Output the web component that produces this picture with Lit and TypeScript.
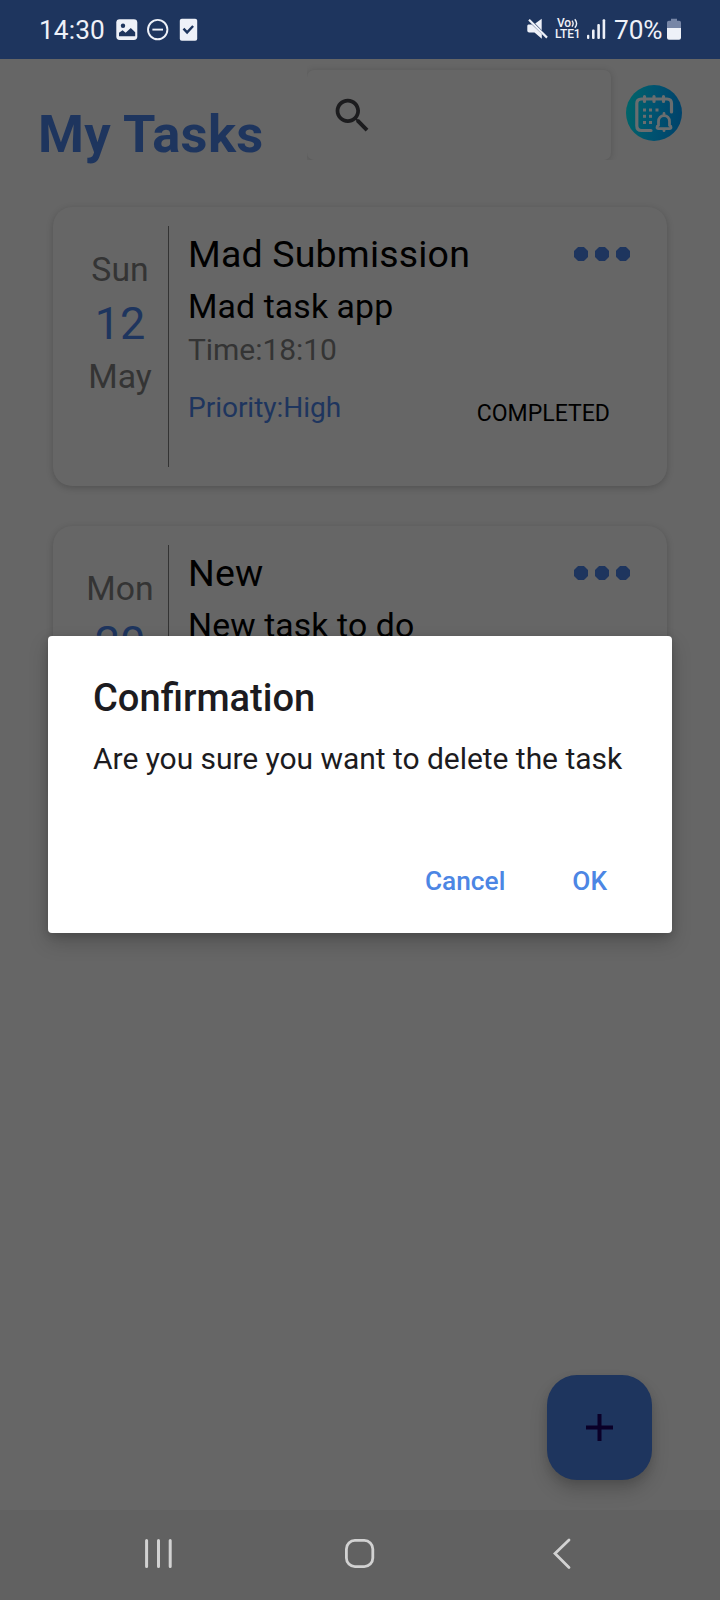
import { LitElement, html, css, nothing } from "lit";
import { customElement, property } from "lit/decorators.js";

interface Task {
  weekday: string;
  day: string;
  month?: string;
  title: string;
  description: string;
  time?: string;
  priority?: string;
  status?: string;
}

const TASKS: Task[] = [
  { weekday: "Sun", day: "12", month: "May", title: "Mad Submission", description: "Mad task app", time: "18:10", priority: "High", status: "COMPLETED" },
  { weekday: "Mon", day: "20", title: "New", description: "New task to do" },
];

@customElement("status-bar")
class StatusBar extends LitElement {
  static styles = css`
    :host { display: flex; height: 59px; background: #1e355e; color: #eef1f8; padding: 0 39px 0 39px; box-sizing: border-box; }
    .group { display: flex; align-items: flex-start; }
    .right { margin-left: auto; }
    .text { font-size: 26.25px; line-height: 30px; margin-top: 15px; white-space: nowrap; }
    .clock { width: 76.5px; letter-spacing: 0.1px; }
    .percent { width: 53px; letter-spacing: -0.1px; }
    svg { display: block; margin-top: 18px; flex: none; }
    .gap-a { margin-right: 9px; }
    .gap-b { margin-right: 10px; }
    .gap-c { margin-right: 6px; }
    .gap-d { margin-right: 8px; }
    .volte { width: 26px; margin: 18px 6px 0 0; font-weight: 500; white-space: nowrap; }
    .vo { font-size: 12px; line-height: 11px; padding-left: 2px; display: flex; letter-spacing: -0.3px; }
    .waves { margin: 0; }
    .lte { font-size: 12px; line-height: 11px; letter-spacing: -0.1px; }
  `;
  render() {
    return html`
      <div class="group">
        <span class="text clock">14:30</span>
        <svg class="gap-a" width="22" height="23" viewBox="0 0 22 23">
          <rect x="0.3" y="1.2" width="21" height="20.8" rx="3.4" fill="#eef1f8" />
          <circle cx="7" cy="7.7" r="2.2" fill="#1e355e" />
          <path d="M3 18.2v-3.4l3.6-2.6 3 2.6 5.2-4.8 4.4 4.2v4z" fill="#1e355e" />
        </svg>
        <svg class="gap-b" width="22" height="23" viewBox="0 0 22 23" fill="none" stroke="#eef1f8" stroke-width="1.9">
          <circle cx="10.7" cy="11.6" r="9.7" />
          <path d="M5.4 11.6h10.6" />
        </svg>
        <svg width="20" height="23" viewBox="0 0 20 23">
          <rect x="0.8" y="0.7" width="17.4" height="22" rx="2" fill="#eef1f8" />
          <path d="M4.500 10.600l3.600 3.800 6-6.400" fill="none" stroke="#1e355e" stroke-width="2.4" />
        </svg>
      </div>
      <div class="group right">
        <svg class="gap-c" width="22" height="22" viewBox="0 0 22 22">
          <path d="M1.400 6.500h3.400l10 9.500v4.700L7.500 14.500H2.200Q.3 14.500.3 12.800V8q0-1.500 1.100-1.500z" fill="#eef1f8" />
          <path d="M8.200 5.400l6.500-4.600v11.400z" fill="#eef1f8" />
          <path d="M2 1.800l18 17.800" stroke="#eef1f8" stroke-width="2.200" />
        </svg>
        <div class="volte">
          <div class="vo">Vo
            <svg class="waves" width="8" height="11" viewBox="0 0 8 11" fill="none" stroke="#eef1f8" stroke-width="1.400">
              <path d="M1 2.600q2.300 3 0 6M3.800 1.200q3.600 4.200 0 8.600" />
            </svg>
          </div>
          <div class="lte">LTE1</div>
        </div>
        <svg class="gap-d" width="19" height="22" viewBox="0 0 19 22" fill="#eef1f8">
          <rect x="0" y="16.800" width="2.300" height="4.200" rx="1" />
          <rect x="5" y="11.600" width="2.600" height="9.400" rx="1" />
          <rect x="10.300" y="6" width="2.600" height="15" rx="1" />
          <rect x="15.600" y="1.200" width="2.600" height="19.800" rx="1" />
        </svg>
        <span class="text percent">70%</span>
        <svg width="14" height="23" viewBox="0 0 14 23">
          <path d="M4 .8h6v2h2.200Q14 2.800 14 4.600V10H0V4.600Q0 2.800 1.800 2.800H4z" fill="#7786a6" />
          <path d="M0 10h14v9.800q0 2-2 2H2q-2 0-2-2z" fill="#eef1f8" />
        </svg>
      </div>
    `;
  }
}

@customElement("app-header")
class AppHeader extends LitElement {
  static styles = css`
    :host { display: flex; height: 101px; padding-left: 38px; }
    .title { width: 269px; margin: 45px 0 0; font-size: 52.5px; line-height: 60px; font-weight: 700; letter-spacing: 0.35px; color: #1e355e; white-space: nowrap; }
    .search { width: 312px; height: 101px; overflow: hidden; }
    .field { width: 304px; height: 90px; margin-top: 11px; border-radius: 7px; background: #666; box-shadow: 0 1px 7px rgba(0, 0, 0, 0.18); box-sizing: border-box; padding: 23px; }
    .field svg { display: block; }
    .logo { margin: 25px 0 0 7px; }
  `;
  render() {
    return html`
      <h1 class="title">My Tasks</h1>
      <div class="search">
        <div class="field">
          <svg width="45" height="45" viewBox="0 0 24 24" fill="#1c1c1e">
            <path d="M15.500 14h-.79l-.28-.27C15.410 12.590 16 11.110 16 9.500 16 5.910 13.090 3 9.500 3S3 5.910 3 9.500 5.910 16 9.500 16c1.610 0 3.090-.59 4.230-1.570l.27.28v.79l5 4.990L20.490 19l-4.990-5zm-6 0C7.010 14 5 11.990 5 9.500S7.010 5 9.500 5 14 7.010 14 9.500 11.990 14 9.500 14z" />
          </svg>
        </div>
      </div>
      <svg class="logo" width="58" height="58" viewBox="0 0 58 58" fill="none" stroke-linecap="round">
        <defs>
          <linearGradient id="disc" x1="0" y1="0.5" x2="1" y2="0.6">
            <stop offset="0" stop-color="#006469" />
            <stop offset="0.5" stop-color="#005270" />
            <stop offset="1" stop-color="#00426a" />
          </linearGradient>
        </defs>
        <circle cx="28" cy="29" r="28" fill="url(#disc)" />
        <g stroke="#696d6f" stroke-width="3.200">
          <path d="M25 46.500H15.500q-4.700 0-4.700-4.700V19.500q0-4.500 4.700-4.500H41q4.500 0 4.500 4.500v8.500" />
          <path d="M18.500 12.500v5M28 12.500v5M37.500 12.500v5" />
          <path d="M32.500 44.700c-2 0-2-2.600 0-3.300V37.500c0-3.500 2.400-5.900 5.500-5.900s5.500 2.400 5.500 5.900v3.900c2 .7 2 3.300 0 3.300z" stroke-width="2.800" stroke-linejoin="round" />
          <path d="M38 29.500v1M38 46v.7" stroke-width="2.800" />
        </g>
        <g fill="#696d6f">
          <rect x="17" y="24.500" width="3" height="3" /><rect x="23" y="24.500" width="3" height="3" /><rect x="29.500" y="24.500" width="3" height="3" />
          <rect x="17" y="30.800" width="3" height="3" /><rect x="23" y="30.800" width="3" height="3" />
          <rect x="17" y="37" width="3" height="3" /><rect x="23" y="37" width="3" height="3" />
        </g>
      </svg>
    `;
  }
}

@customElement("task-card")
class TaskCard extends LitElement {
  @property({ attribute: false }) task!: Task;
  static styles = css`
    :host { display: grid; grid-template-columns: 96px 1px 1fr; height: 279px; box-sizing: border-box; padding: 19px 37px 19px 19px; border-radius: 19px; background: #666; box-shadow: 0 2px 7px rgba(0, 0, 0, 0.2); }
    .date { display: flex; flex-direction: column; align-items: center; padding-top: 24px; color: #343434; font-size: 33.75px; line-height: 40px; }
    .day { font-size: 45px; line-height: 52px; margin: 8px 0 7px; color: #1e355e; }
    .rule { background: #333; height: 241px; }
    .body { display: flex; flex-direction: column; padding: 6px 0 0 19px; color: #000; white-space: nowrap; }
    .top { display: flex; justify-content: space-between; }
    .title { font-size: 37.5px; line-height: 44px; letter-spacing: 0.18px; }
    .dots { display: flex; gap: 7px; margin-top: 15px; }
    .dot { width: 14px; height: 14px; background: #1e355e; clip-path: polygon(29% 0, 71% 0, 100% 29%, 100% 71%, 71% 100%, 29% 100%, 0 71%, 0 29%); }
    .desc { font-size: 33.75px; line-height: 40px; margin-top: 11px; letter-spacing: 0.12px; }
    .time { font-size: 30px; line-height: 36px; margin-top: 5px; color: #343434; letter-spacing: -0.05px; }
    .bottom { display: flex; justify-content: space-between; margin-top: 23px; padding-right: 20px; }
    .priority { font-size: 28.1px; line-height: 33px; color: #1e355e; letter-spacing: -0.05px; }
    .status { font-size: 23.05px; line-height: 28px; margin-top: 9px; }
  `;
  render() {
    const t = this.task;
    return html`
      <div class="date"><span>${t.weekday}</span><span class="day">${t.day}</span>${t.month ? html`<span>${t.month}</span>` : nothing}</div>
      <div class="rule"></div>
      <div class="body">
        <div class="top">
          <span class="title">${t.title}</span>
          <span class="dots"><i class="dot"></i><i class="dot"></i><i class="dot"></i></span>
        </div>
        <span class="desc">${t.description}</span>
        ${t.time ? html`<span class="time">Time:${t.time}</span>` : nothing}
        ${t.priority ? html`<div class="bottom"><span class="priority">Priority:${t.priority}</span><span class="status">${t.status}</span></div>` : nothing}
      </div>
    `;
  }
}

@customElement("confirm-dialog")
class ConfirmDialog extends LitElement {
  static styles = css`
    :host { display: block; box-sizing: border-box; width: 624px; height: 297px; padding: 39px 45px 0; border-radius: 4px; background: #fff; color: #1c1b20; box-shadow: 0 9px 20px rgba(0, 0, 0, 0.2), 0 2px 9px rgba(0, 0, 0, 0.14); }
    .title { margin: 0; font-size: 38.1px; line-height: 46px; font-weight: 500; }
    .message { margin: 20px 0 0; font-size: 30px; line-height: 36px; white-space: nowrap; letter-spacing: -0.04px; }
    .actions { display: flex; justify-content: flex-end; gap: 67px; margin-top: 89px; padding-right: 20px; }
    .action { font: 500 26.25px/30px Roboto, sans-serif; color: #4c86e4; background: none; border: 0; padding: 0; }
  `;
  render() {
    return html`
      <h2 class="title">Confirmation</h2>
      <p class="message">Are you sure you want to delete the task</p>
      <div class="actions"><button class="action">Cancel</button><button class="action">OK</button></div>
    `;
  }
}

@customElement("nav-bar")
class NavBar extends LitElement {
  static styles = css`
    :host { display: grid; grid-template-columns: 200px 208px 20px; align-items: start; height: 90px; box-sizing: border-box; padding: 27px 0 0 143px; background: #616161; }
    svg { display: block; }
  `;
  render() {
    return html`
      <svg width="32" height="34" viewBox="0 0 32 34" stroke="#d2d2d2" stroke-width="3" stroke-linecap="round"><path d="M3.600 3.500v26M15.500 3.500v26M27.200 3.500v26" /></svg>
      <svg width="32" height="34" viewBox="0 0 32 34" fill="none" stroke="#d2d2d2" stroke-width="2.800"><rect x="3.400" y="3.400" width="26.400" height="26.200" rx="8.500" /></svg>
      <svg width="20" height="34" viewBox="0 0 20 34" fill="none" stroke="#d2d2d2" stroke-width="2.800" stroke-linecap="round"><path d="M18 3L4 16.600l14 14" /></svg>
    `;
  }
}

@customElement("app-root")
class AppRoot extends LitElement {
  static styles = css`
    :host { display: flex; flex-direction: column; position: relative; width: 720px; height: 1600px; overflow: hidden; background: #666; font-family: Roboto, sans-serif; }
    .list { flex: 1; display: flex; flex-direction: column; gap: 40px; padding: 47px 53px 0; }
    .fab { position: absolute; right: 68px; bottom: 120px; width: 105px; height: 105px; border-radius: 30px; background: #1e355e; display: flex; align-items: center; justify-content: center; box-shadow: 0 11px 17px rgba(0, 0, 0, 0.17), 0 3px 8px rgba(0, 0, 0, 0.1); }
    .dialog { position: absolute; left: 48px; top: 636px; }
  `;
  render() {
    return html`
      <status-bar></status-bar>
      <app-header></app-header>
      <main class="list">${TASKS.map((t) => html`<task-card .task=${t}></task-card>`)}</main>
      <div class="fab">
        <svg width="27" height="27" viewBox="0 0 27 27" stroke="#0a0028" stroke-width="4"><path d="M13.500 0v27M0 13.500h27" /></svg>
      </div>
      <nav-bar></nav-bar>
      <confirm-dialog class="dialog"></confirm-dialog>
    `;
  }
}
